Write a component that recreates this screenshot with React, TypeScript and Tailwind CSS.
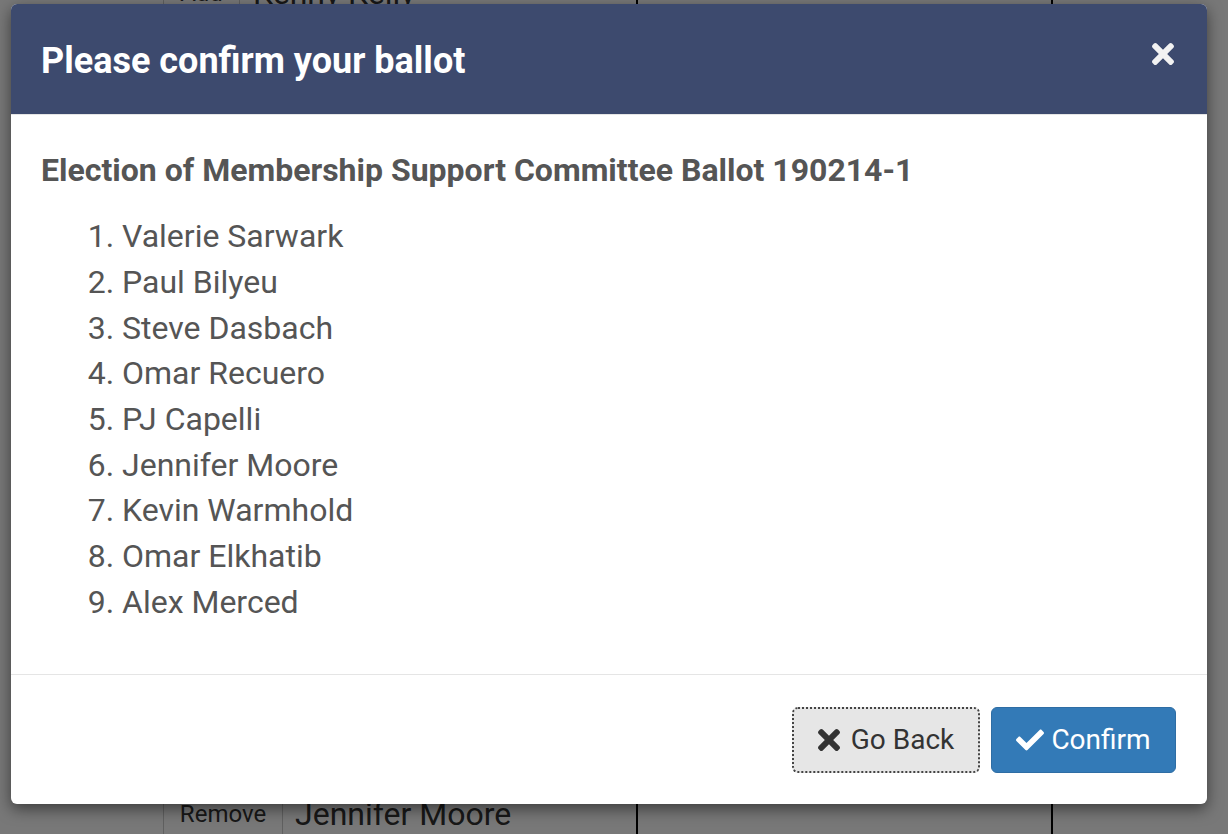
import React from "react";

const candidates = [
	"Valerie Sarwark",
	"Paul Bilyeu",
	"Steve Dasbach",
	"Omar Recuero",
	"PJ Capelli",
	"Jennifer Moore",
	"Kevin Warmhold",
	"Omar Elkhatib",
	"Alex Merced",
];

const TimesIcon = ({ className }: { className?: string }) => (
	<svg viewBox="0 80 352 352" className={className} fill="currentColor">
		<path d="M242.72 256l100.07-100.07c12.28-12.28 12.28-32.19 0-44.48l-22.24-22.24c-12.28-12.28-32.19-12.28-44.48 0L176 189.28 75.930 89.21c-12.28-12.28-32.19-12.28-44.48 0L9.210 111.45c-12.28 12.28-12.28 32.19 0 44.48L109.28 256 9.21 356.07c-12.28 12.28-12.28 32.19 0 44.48l22.24 22.24c12.28 12.28 32.2 12.28 44.48 0L176 322.72l100.07 100.07c12.28 12.28 32.2 12.28 44.48 0l22.24-22.24c12.28-12.28 12.28-32.19 0-44.48L242.72 256z" />
	</svg>
);

const CheckIcon = ({ className }: { className?: string }) => (
	<svg viewBox="0 65 512 382" className={className} fill="currentColor">
		<path d="M173.898 439.404l-166.4-166.4c-9.997-9.997-9.997-26.206 0-36.204l36.203-36.204c9.997-9.998 26.207-9.998 36.204 0L192 312.69 432.095 72.596c9.997-9.997 26.207-9.997 36.204 0l36.203 36.204c9.997 9.997 9.997 26.206 0 36.204l-294.4 294.401c-9.998 9.997-26.207 9.997-36.204-.001z" />
	</svg>
);

const App = () => {
	return (
		<div className="relative h-screen w-full overflow-hidden bg-white font-['Roboto','Liberation_Sans',sans-serif] text-[#333]">
			{/* page behind the dialog */}
			<div className="flex h-full">
				<div className="ml-[163px] flex w-[473px] flex-col justify-between">
					<div className="-mt-[27px] flex h-[40px] items-center">
						<div className="flex h-full w-[77px] items-center justify-center border-x border-[#ccc] text-[24px]">
							Add
						</div>
						<span className="pl-[13px] text-[32px]">Kenny Kelly</span>
					</div>
					<div className="flex h-[40px] items-center">
						<div className="flex h-full w-[120px] items-center justify-center border-x border-[#ccc] text-[24px]">
							Remove
						</div>
						<span className="pl-[12px] text-[32px]">Jennifer Moore</span>
					</div>
				</div>
				<div className="w-[417px] border-x-2 border-black" />
			</div>

			{/* backdrop */}
			<div className="absolute inset-0 bg-black/[0.53]" />

			{/* dialog */}
			<div className="absolute left-[11px] top-[4px] w-[1196px] overflow-hidden rounded-[6px] bg-white shadow-[0_5px_15px_rgba(0,0,0,0.5)]">
				<div className="flex h-[111px] items-center justify-between border-b border-[#e5e5e5] bg-[#3d4a6e] pl-[30px] pr-[33px] pt-[3px]">
					<h1 className="text-[36px] font-bold leading-none text-white">
						Please confirm your ballot
					</h1>
					<TimesIcon className="-mt-[14px] h-[22px] w-[22px] text-[#f2f2f2]" />
				</div>
				<div className="px-[30px] pt-[38px] pb-[48px] text-[#555]">
					<h4 className="text-[32px] font-bold leading-[1.1]">
						Election of Membership Support Committee Ballot 190214-1
					</h4>
					<ol className="mt-[26px] list-decimal pl-[81px] text-[32px] leading-[1.42857]">
						{candidates.map((name) => (
							<li key={name}>{name}</li>
						))}
					</ol>
				</div>
				<div className="flex justify-end gap-[11px] border-t border-[#e5e5e5] pt-[32px] pb-[31px] pr-[31px]">
					<button className="flex h-[66px] w-[188px] items-center justify-center gap-[11px] rounded-[6px] border-2 border-dotted border-[#444] bg-[#e6e6e6] text-[28px] text-[#333]">
						<TimesIcon className="h-[22px] w-[22px]" />
						Go Back
					</button>
					<button className="flex h-[66px] w-[185px] items-center justify-center gap-[7px] rounded-[6px] border border-[#2e6da4] bg-[#337ab7] text-[28px] text-white">
						<CheckIcon className="h-[22px] w-[28px]" />
						Confirm
					</button>
				</div>
			</div>
		</div>
	);
};

export default App;
